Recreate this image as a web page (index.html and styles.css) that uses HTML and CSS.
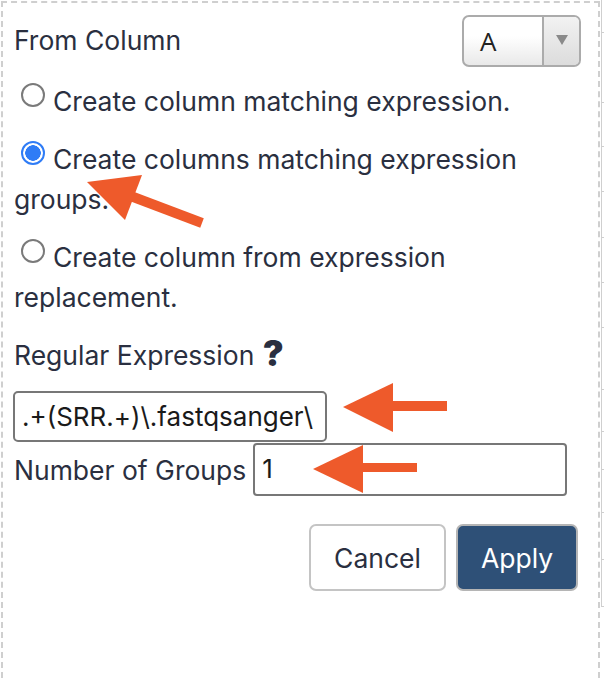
FILE: index.html
```html
<!DOCTYPE html>
<html>
<head>
<meta charset="utf-8">
<link rel="stylesheet" href="styles.css">
</head>
<body>
<div class="page">
  <div class="panel">
    <div class="row-from">
      <span class="label">From Column</span>
      <div class="select">
        <span class="select-value">A</span>
        <span class="select-btn"><span class="tri"></span></span>
      </div>
    </div>
    <div class="option"><span class="radio"></span>Create column matching expression.</div>
    <div class="option"><span class="radio checked"></span>Create columns matching expression groups.</div>
    <div class="option"><span class="radio"></span>Create column from expression replacement.</div>
    <div class="regex-label">Regular Expression <span class="help">?</span></div>
    <div class="input regex">.+(SRR.+)\.fastqsanger\</div>
    <div class="groups-row">
      <span class="label">Number of Groups</span>
      <div class="input groups">1</div>
    </div>
    <div class="buttons">
      <button class="btn cancel">Cancel</button>
      <button class="btn apply">Apply</button>
    </div>
  </div>
  <div class="strip">
    <div></div><div></div><div></div><div></div><div></div><div></div><div></div>
    <div></div><div></div><div></div><div></div><div></div><div></div>
  </div>
</div>
<svg class="arrows" width="606" height="678" viewBox="0 0 606 678">
  <line x1="128" y1="195" x2="202" y2="223" stroke="#ee5a2b" stroke-width="10"/>
  <polygon points="87,182 142,175 125,220" fill="#ee5a2b"/>
  <rect x="390" y="401" width="57" height="10" fill="#ee5a2b"/>
  <polygon points="343,407 393,383 393,432" fill="#ee5a2b"/>
  <rect x="360" y="463" width="57" height="9" fill="#ee5a2b"/>
  <polygon points="313,469 363,445 363,493" fill="#ee5a2b"/>
</svg>
</body>
</html>
```
FILE: styles.css
```css
html, body {
  margin: 0;
  padding: 0;
  background: #fff;
}
body {
  width: 606px;
  height: 678px;
  overflow: hidden;
  position: relative;
  font-family: Inter, "Noto Sans", sans-serif;
  font-size: 26.5px;
  color: #2a2f40;
}
.page {
  display: flex;
  align-items: flex-start;
  height: 678px;
  overflow: hidden;
}
.panel {
  margin: 1px 0 0 1px;
  width: 584px;
  height: 664px;
  border: 2px dashed #cfcfcf;
  border-bottom: none;
  padding: 11px 0 0 11px;
  box-sizing: content-box;
}
.strip {
  margin-left: 1px;
  width: 2px;
  display: grid;
  grid-template-rows: 33px 70px 44px 45px 46px 45px 45px 62px 42px 38px 43px 47px 47px;
  border-left: 1px solid #cfcfcf;
}
.strip div {
  border-bottom: 1px solid #cfcfcf;
}
.row-from {
  display: flex;
  justify-content: space-between;
  align-items: center;
  height: 53px;
  padding-right: 17px;
}
.label {
  line-height: 40px;
  white-space: nowrap;
}
.row-from .label {
  margin-top: -2px;
}
.select {
  display: flex;
  width: 119px;
  height: 52px;
  box-sizing: border-box;
  border: 2px solid #ababab;
  border-radius: 7px;
  background: linear-gradient(#ffffff 40%, #e9e9e9);
  overflow: hidden;
}
.select-value {
  flex: 1;
  padding-left: 16px;
  line-height: 48px;
  color: #222;
  font-family: "Open Sans", Inter, sans-serif;
  font-size: 26px;
}
.select-btn {
  width: 35px;
  border-left: 2px solid #ababab;
  display: flex;
  align-items: center;
  justify-content: center;
  background: linear-gradient(#f2f2f2, #dcdcdc);
}
.tri {
  width: 0;
  height: 0;
  border-left: 6px solid transparent;
  border-right: 6px solid transparent;
  border-top: 10px solid #8a8a8a;
  margin-top: -2px;
}
.option {
  line-height: 40px;
  margin-top: 18px;
  padding-right: 60px;
}
.row-from + .option {
  margin-top: 14px;
}
.radio {
  display: inline-block;
  width: 24px;
  height: 24px;
  box-sizing: border-box;
  border: 2px solid #7a7a7a;
  border-radius: 50%;
  margin: 0 8px 0 7px;
  vertical-align: 4px;
  background: #fff;
}
.radio.checked {
  border-color: #2f7cf6;
  background: radial-gradient(circle, #2f7cf6 0 7.5px, #fff 8px);
}
.regex-label {
  line-height: 40px;
  margin-top: 18px;
}
.help {
  font-weight: 900;
  font-size: 35px;
  line-height: 30px;
  color: #2a2f40;
  margin-left: 1px;
  vertical-align: -1px;
}
.input {
  width: 314px;
  height: 51px;
  box-sizing: border-box;
  border: 2px solid #777;
  border-radius: 5px;
  padding-left: 7px;
  line-height: 47px;
  color: #1a1a1a;
  white-space: nowrap;
  overflow: hidden;
  font-family: Inter, sans-serif;
  font-size: 26px;
}
.regex {
  margin-top: 16px;
  margin-left: -1px;
}
.groups-row {
  display: flex;
  align-items: center;
  gap: 7px;
  margin-top: 1px;
}
.groups {
  height: 53px;
  border-radius: 4px;
}
.buttons {
  display: flex;
  justify-content: flex-end;
  gap: 10px;
  margin-top: 28px;
  padding-right: 20px;
}
.btn {
  height: 67px;
  border-radius: 7px;
  font-family: Inter, sans-serif;
  font-size: 26.5px;
  padding: 0;
  box-sizing: border-box;
}
.cancel {
  width: 137px;
  background: #fff;
  border: 2px solid #c4c4c4;
  color: #2a2f40;
}
.apply {
  width: 122px;
  background: #2e5077;
  border: 2px solid #b5b5b5;
  color: #fff;
}
.arrows {
  position: absolute;
  left: 0;
  top: 0;
  pointer-events: none;
}
```
